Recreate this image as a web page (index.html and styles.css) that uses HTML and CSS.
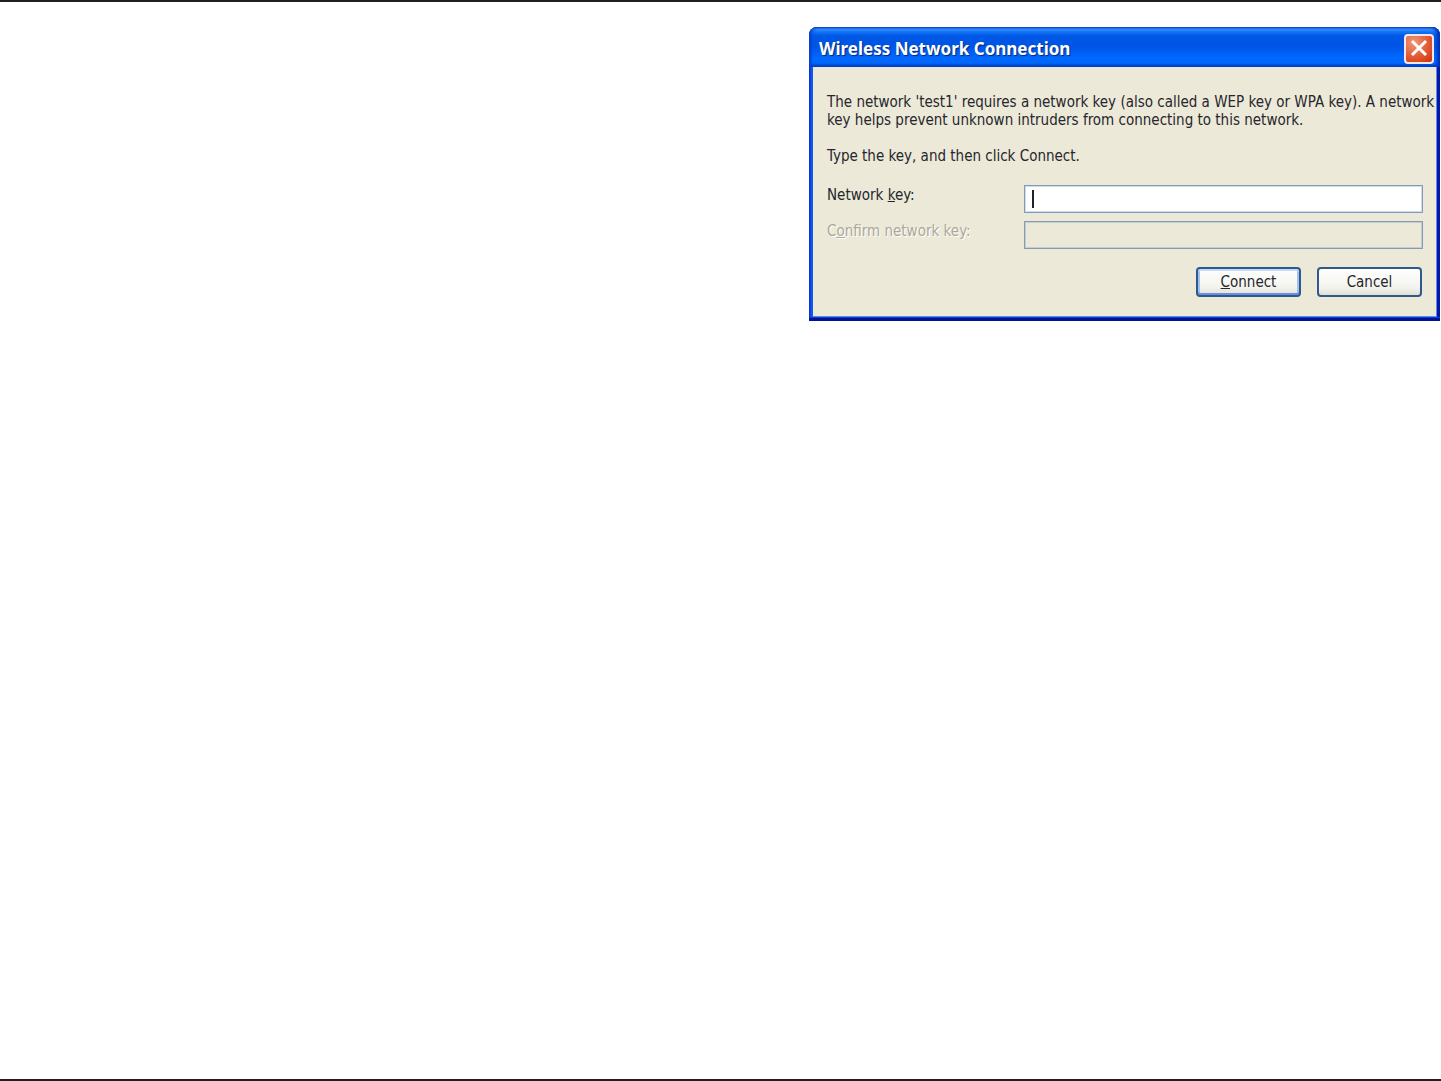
FILE: index.html
```html
<!DOCTYPE html>
<html lang="en">

<head>
    <meta charset="UTF-8">
    <meta name="viewport" content="width=device-width, initial-scale=1.0">
    <title>Wireless Network Connection</title>
    <link rel="stylesheet" href="styles.css">
</head>

<body>
    <main class="page">
        <section class="dialog" role="dialog" aria-labelledby="title">
            <header class="titlebar">
                <h1 id="title">Wireless Network Connection</h1>
                <button type="button" class="close" aria-label="Close">
                    <svg viewBox="0 0 26 26" aria-hidden="true">
                        <path d="M6 5L20 19M20 5L6 19" />
                    </svg>
                </button>
            </header>
            <form class="content">
                <p>The network 'test1' requires a network key (also called a WEP key or WPA key). A network<br>
                    key helps prevent unknown intruders from connecting to this network.</p>
                <p>Type the key, and then click Connect.</p>
                <div class="fields">
                    <div class="row">
                        <label for="key">Network <u>k</u>ey:</label>
                        <div class="field">
                            <input type="password" id="key">
                            <span class="caret"></span>
                        </div>
                    </div>
                    <div class="row">
                        <label for="confirm" class="disabled">C<u>o</u>nfirm network key:</label>
                        <div class="field">
                            <input type="password" id="confirm" disabled>
                        </div>
                    </div>
                </div>
                <div class="buttons">
                    <button type="button" class="btn default"><u>C</u>onnect</button>
                    <button type="button" class="btn">Cancel</button>
                </div>
            </form>
        </section>
    </main>
</body>

</html>
```
FILE: styles.css
```css
* {
    box-sizing: border-box;
}

body,
h1,
p {
    margin: 0;
}

body {
    background-color: #fff;
    color: #26262c;
    font: 15px/18px "DejaVu Sans Condensed", "DejaVu Sans", sans-serif;
}

.page {
    display: flex;
    justify-content: flex-end;
    align-items: flex-start;
    min-height: 100vh;
    padding: 25px 1px 25px 16px;
    border-top: 2px solid #231f20;
    border-bottom: 2px solid #231f20;
}

/* window frame */
.dialog {
    width: 100%;
    max-width: 631px;
    border-radius: 8px 8px 0 0;
    background: linear-gradient(to right, #0831d9 1px, #0f5ae8 2px, #0f5ae8 50%, #0019a8 50%);
    padding: 0 3px 4px 4px;
    box-shadow: inset 0 -3px #001296, inset 0 -4px #0a3fd0;
}

.titlebar {
    display: flex;
    justify-content: space-between;
    align-items: center;
    height: 40px;
    margin: 0 -3px 0 -4px;
    padding: 4px 6px 0 10px;
    border-radius: 8px 8px 0 0;
    background: linear-gradient(#0a5be0 0, #3a93ff 2px, #1272f4 5px, #0058e6 9px, #0054e3 18px, #005cf2 24px, #0069ff 31px, #0066fc 36px, #0048d4 39px, #0040c4 40px);
    box-shadow: inset 2px 0 3px #0a3cc8, inset -3px 0 3px #0030b8;
}

h1 {
    color: #fff;
    font: bold 17px/24px "Noto Sans", "Open Sans", sans-serif;
    text-shadow: 1px 1px 1px #06267e;
    white-space: nowrap;
}

.close {
    width: 30px;
    height: 30px;
    padding: 0;
    border: 2px solid #f4e8ec;
    border-radius: 4px;
    background: radial-gradient(circle at 30% 25%, #ee9678, #e25a34 55%, #cc3204);
}

.close svg {
    display: block;
    width: 26px;
    height: 26px;
    fill: none;
    stroke: #fff;
    stroke-width: 3;
}

.content {
    display: flex;
    flex-direction: column;
    gap: 18px;
    padding: 26px 14px 20px;
    background-color: #ece9d8;
    box-shadow: inset -1px -1px #5a8ce8;
}

.content p {
    margin-right: -14px;
    white-space: nowrap;
}

.fields {
    display: flex;
    flex-direction: column;
    gap: 8px;
    margin-top: 2px;
}

.row {
    display: flex;
}

.row label {
    flex: 0 0 197px;
    height: 20px;
    line-height: 20px;
}

.row .disabled {
    color: #aca899;
    text-shadow: 1px 1px #fff;
}

.field {
    position: relative;
    flex: 1;
}

.field input {
    display: block;
    width: 100%;
    height: 28px;
    padding: 4px 8px;
    border: 1px solid #7f9db9;
    box-shadow: inset 0 0 0 1px #d3dce4;
    background-color: #fff;
    font: inherit;
}

.field input:disabled {
    background-color: #ece9d8;
    box-shadow: inset 0 0 0 1px #c8cdca;
}

.caret {
    position: absolute;
    top: 5px;
    left: 8px;
    width: 2px;
    height: 18px;
    background-color: #222;
}

.buttons {
    display: flex;
    justify-content: flex-end;
    gap: 16px;
    padding-right: 1px;
}

.btn {
    width: 105px;
    height: 30px;
    padding: 0;
    border: 2px solid #2c5a8c;
    border-radius: 4px;
    background: linear-gradient(#fff, #f3f3ee 70%, #e2dfd4);
    color: #26262c;
    font: inherit;
}

.default {
    box-shadow: inset 0 2px #c6dafa, inset 0 -2px #6a8ee0, inset 2px 0 #a4c0f0, inset -2px 0 #a4c0f0;
}
```
